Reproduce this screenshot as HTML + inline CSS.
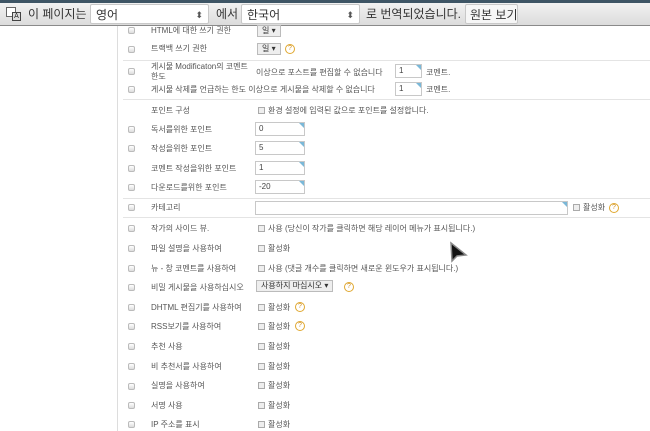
<!DOCTYPE html>
<html><head><meta charset="utf-8"><style>
*{margin:0;padding:0;box-sizing:border-box}
body{width:650px;height:431px;overflow:hidden;background:#fff;position:relative;font-family:"Liberation Sans","Noto Sans CJK KR",sans-serif;}
.top{position:absolute;left:0;top:0;width:650px;height:3px;background:#3e5565}
.bar{position:absolute;left:0;top:3px;width:650px;height:23px;background:linear-gradient(#f2f2f2,#dcdcdc);border-bottom:1px solid #8a8a8a;font-size:12px;color:#333;white-space:nowrap}
.bar>span,.bar>div{position:absolute;top:1px;line-height:20px;white-space:nowrap}
.sel{background:#fff;border:1px solid #c8c8c8;border-radius:2px;height:20px}
.arr{position:absolute;right:5px;top:0;font-size:9px;color:#555}
.vl{position:absolute;left:117px;top:26px;width:1px;height:405px;background:#ddd}
.hr{position:absolute;left:123px;width:527px;height:1px;background:#e4e4e4}
.t{position:absolute;font-size:8px;color:#555;white-space:nowrap;line-height:10px}
.cb{position:absolute;width:7px;height:7px;border:1px solid #bbb;border-radius:2px;background:linear-gradient(#fff,#ddd)}
.cb2{display:inline-block;width:7px;height:7px;border:1px solid #aaa;background:#eee;vertical-align:-1px;margin-right:3px}
.in{position:absolute;height:14px;border:1px solid #c8c8c8;font-size:8px;color:#444;padding-left:3px;line-height:12px;background:#fff}
.in:after{content:"";position:absolute;right:0;top:0;border-top:5px solid #7ab8d8;border-left:5px solid transparent}
.s{position:absolute;height:12px;border:1px solid #bbb;background:#eee;font-size:8px;color:#333;padding:0 4px;line-height:10px;white-space:nowrap}
.q{position:absolute;width:10px;height:10px;border:1px solid #e0a830;border-radius:50%;color:#d09020;font-size:7px;line-height:8px;text-align:center}
</style></head><body>
<div class="top"></div>
<div class="bar">
<div style="left:6px;top:4px;width:10px;height:10px;border:1px solid #666;background:#fff"></div>
<div style="left:12px;top:9px;width:9px;height:9px;border:1px solid #444;background:#ddd;font-size:7px;line-height:7px;text-align:center;color:#222">A</div>
<span style="left:28px">이 페이지는</span>
<div class="sel" style="left:90px;width:119px;padding-left:5px">영어<span class="arr">⬍</span></div>
<span style="left:216px">에서</span>
<div class="sel" style="left:241px;width:119px;padding-left:5px">한국어<span class="arr">⬍</span></div>
<span style="left:366px">로 번역되었습니다.</span>
<div class="sel" style="left:465px;width:53px;padding-left:4px;background:#f6f6f6">원본 보기</div>
</div>
<div class="vl"></div>
<div class="hr" style="top:60px"></div>
<div class="hr" style="top:99px"></div>
<div class="hr" style="top:198px"></div>
<div class="hr" style="top:217px"></div>

<div class="cb" style="left:128px;top:27px"></div><div class="t" style="left:151px;top:26px">HTML에 대한 쓰기 권한</div><div class="s" style="left:257px;top:25px">일 ▾</div>
<div class="cb" style="left:128px;top:46px"></div><div class="t" style="left:151px;top:44px">트랙백 쓰기 권한</div><div class="s" style="left:257px;top:43px">일 ▾</div><div class="q" style="left:285px;top:44px">?</div>
<div class="cb" style="left:128px;top:68px"></div><div class="t" style="left:151px;top:62px">게시물 Modificaton의 코멘트<br>한도</div><div class="t" style="left:256px;top:68px">이상으로 포스트를 편집할 수 없습니다</div><div class="in" style="left:395px;top:64px;width:27px">1</div><div class="t" style="left:426px;top:68px">코멘트.</div>
<div class="cb" style="left:128px;top:86px"></div><div class="t" style="left:151px;top:85px">게시물 삭제를 언급하는 한도 이상으로 게시물을 삭제할 수 없습니다</div><div class="in" style="left:395px;top:82px;width:27px">1</div><div class="t" style="left:426px;top:85px">코멘트.</div>
<div class="t" style="left:151px;top:106px">포인트 구성</div><div class="t" style="left:258px;top:106px"><span class="cb2"></span>환경 설정에 입력된 값으로 포인트를 설정합니다.</div>

<div class="cb" style="left:128px;top:126px"></div><div class="t" style="left:151px;top:125px">독서를위한 포인트</div><div class="in" style="left:255px;top:122px;width:50px">0</div>
<div class="cb" style="left:128px;top:145px"></div><div class="t" style="left:151px;top:144px">작성을위한 포인트</div><div class="in" style="left:255px;top:141px;width:50px">5</div>
<div class="cb" style="left:128px;top:165px"></div><div class="t" style="left:151px;top:164px">코멘트 작성을위한 포인트</div><div class="in" style="left:255px;top:161px;width:50px">1</div>
<div class="cb" style="left:128px;top:184px"></div><div class="t" style="left:151px;top:183px">다운로드를위한 포인트</div><div class="in" style="left:255px;top:180px;width:50px">-20</div>
<div class="cb" style="left:128px;top:204px"></div><div class="t" style="left:151px;top:203px">카테고리</div><div class="in" style="left:255px;top:201px;width:313px"></div><div class="t" style="left:573px;top:203px"><span class="cb2"></span>활성화</div><div class="q" style="left:609px;top:203px">?</div>

<div class="cb" style="left:128px;top:225px"></div><div class="t" style="left:151px;top:224px">작가의 사이드 뷰.</div><div class="t" style="left:258px;top:224px"><span class="cb2"></span>사용 (당신이 작가를 클릭하면 해당 레이어 메뉴가 표시됩니다.)</div>
<div class="cb" style="left:128px;top:245px"></div><div class="t" style="left:151px;top:244px">파일 설명을 사용하여</div><div class="t" style="left:258px;top:244px"><span class="cb2"></span>활성화</div>
<div class="cb" style="left:128px;top:265px"></div><div class="t" style="left:151px;top:264px">뉴 - 창 코멘트를 사용하여</div><div class="t" style="left:258px;top:264px"><span class="cb2"></span>사용 (댓글 개수를 클릭하면 새로운 윈도우가 표시됩니다.)</div>
<div class="cb" style="left:128px;top:284px"></div><div class="t" style="left:151px;top:283px">비밀 게시물을 사용하십시오</div><div class="s" style="left:256px;top:280px">사용하지 마십시오 ▾</div><div class="q" style="left:344px;top:282px">?</div>
<div class="cb" style="left:128px;top:304px"></div><div class="t" style="left:151px;top:303px">DHTML 편집기를 사용하여</div><div class="t" style="left:258px;top:303px"><span class="cb2"></span>활성화</div><div class="q" style="left:295px;top:302px">?</div>
<div class="cb" style="left:128px;top:323px"></div><div class="t" style="left:151px;top:322px">RSS보기를 사용하여</div><div class="t" style="left:258px;top:322px"><span class="cb2"></span>활성화</div><div class="q" style="left:295px;top:321px">?</div>
<div class="cb" style="left:128px;top:343px"></div><div class="t" style="left:151px;top:342px">추천 사용</div><div class="t" style="left:258px;top:342px"><span class="cb2"></span>활성화</div>
<div class="cb" style="left:128px;top:363px"></div><div class="t" style="left:151px;top:362px">비 추천서를 사용하여</div><div class="t" style="left:258px;top:362px"><span class="cb2"></span>활성화</div>
<div class="cb" style="left:128px;top:383px"></div><div class="t" style="left:151px;top:381px">실명을 사용하여</div><div class="t" style="left:258px;top:381px"><span class="cb2"></span>활성화</div>
<div class="cb" style="left:128px;top:402px"></div><div class="t" style="left:151px;top:401px">서명 사용</div><div class="t" style="left:258px;top:401px"><span class="cb2"></span>활성화</div>
<div class="cb" style="left:128px;top:421px"></div><div class="t" style="left:151px;top:420px">IP 주소를 표시</div><div class="t" style="left:258px;top:420px"><span class="cb2"></span>활성화</div>

<svg style="position:absolute;left:448px;top:241px" width="22" height="24" viewBox="0 0 22 24"><path d="M3 2 L4 20 L9 15 L18 14 Z" fill="#111" stroke="#888" stroke-width="1.5"/></svg>
</body></html>
